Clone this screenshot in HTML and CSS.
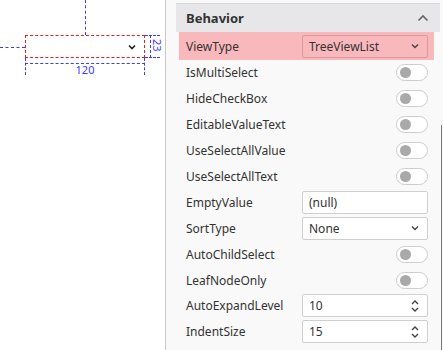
FILE: index.html
```html
<!DOCTYPE html>
<html lang="en">
<head>
    <meta charset="UTF-8">
    <title>Designer - Behavior</title>
    <link rel="stylesheet" href="styles.css">
</head>
<body>
    <div class="layout">
        <!-- Design surface -->
        <div class="canvas">
            <div class="guide guide-top"></div>
            <div class="guide guide-left"></div>
            <div class="control">
                <svg class="chev" width="8" height="6" viewBox="0 0 8 6"><path d="M1 1.5 L4 4.5 L7 1.5" fill="none" stroke="#222" stroke-width="1.6"/></svg>
            </div>
            <div class="dim-w"></div>
            <div class="tick tick-l"></div>
            <div class="tick tick-r"></div>
            <div class="dim-w-label">120</div>
            <div class="dim-h"></div>
            <div class="dim-h-top"></div>
            <div class="dim-h-bottom"></div>
            <div class="dim-h-label">23</div>
        </div>

        <!-- Property grid -->
        <div class="panel">
            <div class="group-header">
                <span>Behavior</span>
                <svg width="12" height="8" viewBox="0 0 12 8"><path d="M1.5 6.5 L6 2 L10.5 6.5" fill="none" stroke="#666" stroke-width="1.6"/></svg>
            </div>
            <div class="rows">
                <div class="row selected">
                    <span class="label">ViewType</span>
                    <div class="editor select">TreeViewList<svg width="8" height="6" viewBox="0 0 8 6"><path d="M1 1.5 L4 4.5 L7 1.5" fill="none" stroke="#444" stroke-width="1.4"/></svg></div>
                </div>
                <div class="row"><span class="label">IsMultiSelect</span><div class="toggle"></div></div>
                <div class="row"><span class="label">HideCheckBox</span><div class="toggle"></div></div>
                <div class="row"><span class="label">EditableValueText</span><div class="toggle"></div></div>
                <div class="row"><span class="label">UseSelectAllValue</span><div class="toggle"></div></div>
                <div class="row"><span class="label">UseSelectAllText</span><div class="toggle"></div></div>
                <div class="row"><span class="label">EmptyValue</span><div class="editor">(null)</div></div>
                <div class="row">
                    <span class="label">SortType</span>
                    <div class="editor select">None<svg width="8" height="6" viewBox="0 0 8 6"><path d="M1 1.5 L4 4.5 L7 1.5" fill="none" stroke="#444" stroke-width="1.4"/></svg></div>
                </div>
                <div class="row"><span class="label">AutoChildSelect</span><div class="toggle"></div></div>
                <div class="row"><span class="label">LeafNodeOnly</span><div class="toggle"></div></div>
                <div class="row">
                    <span class="label">AutoExpandLevel</span>
                    <div class="editor spin">10<svg width="8" height="14" viewBox="0 0 8 14"><path d="M1 5 L4 2 L7 5 M1 9 L4 12 L7 9" fill="none" stroke="#444" stroke-width="1.4"/></svg></div>
                </div>
                <div class="row">
                    <span class="label">IndentSize</span>
                    <div class="editor spin">15<svg width="8" height="14" viewBox="0 0 8 14"><path d="M1 5 L4 2 L7 5 M1 9 L4 12 L7 9" fill="none" stroke="#444" stroke-width="1.4"/></svg></div>
                </div>
            </div>
            <div class="scroll-thumb"></div>
        </div>
    </div>
</body>
</html>
```

FILE: styles.css
```css
* {
    margin: 0;
    padding: 0;
    box-sizing: border-box;
}

body {
    font-family: "Noto Sans", "Open Sans", sans-serif;
    font-size: 12px;
    color: #333;
    background-color: white;
    overflow: hidden;
}

.layout {
    display: flex;
    width: 443px;
    height: 350px;
}

/* Design surface */
.canvas {
    position: relative;
    width: 165px;
    flex-shrink: 0;
    background-color: white;
}

.guide,
.dim-w,
.dim-h,
.tick,
.dim-h-top,
.dim-h-bottom {
    position: absolute;
}

.guide-top {
    left: 85px;
    top: 0;
    height: 35px;
    border-left: 1px dashed #3b3bff;
}

.guide-left {
    left: 0;
    top: 47px;
    width: 25px;
    border-top: 1px dashed #3b3bff;
}

.control {
    position: absolute;
    left: 25px;
    top: 35px;
    width: 120px;
    height: 23px;
    border: 1px dashed #e02020;
    background-color: white;
}

.chev {
    position: absolute;
    right: 8px;
    top: 8px;
}

.dim-w {
    left: 25px;
    top: 63px;
    width: 120px;
    border-top: 1px dashed #3b3bff;
}

.tick {
    top: 58px;
    height: 17px;
    border-left: 1px dashed #3b3bff;
}

.tick-l {
    left: 25px;
}

.tick-r {
    left: 144px;
}

.dim-w-label {
    position: absolute;
    left: 25px;
    top: 63px;
    width: 120px;
    text-align: center;
    font-size: 11px;
    line-height: 14px;
    color: #3b3bff;
}

.dim-h {
    left: 150px;
    top: 35px;
    height: 23px;
    border-left: 1px dashed #3b3bff;
}

.dim-h-top {
    left: 145px;
    top: 35px;
    width: 15px;
    border-top: 1px dashed #3b3bff;
}

.dim-h-bottom {
    left: 145px;
    top: 57px;
    width: 15px;
    border-top: 1px dashed #3b3bff;
}

.dim-h-label {
    position: absolute;
    left: 151px;
    top: 39px;
    font-size: 11px;
    line-height: 12px;
    color: #3b3bff;
    writing-mode: vertical-rl;
}

/* Property grid */
.panel {
    position: relative;
    flex: 1;
    border-left: 1px solid #c8c8c8;
    background-color: #f9f9f9;
    padding: 3px 3px 0 10px;
}

.group-header {
    display: flex;
    align-items: center;
    justify-content: space-between;
    height: 29px;
    padding: 0 11px 0 10px;
    border-top: 1px solid #d6d6d8;
    background-color: #e7e7e9;
    font-size: 13px;
    font-weight: bold;
    color: #333;
}

.rows {
    padding: 0 6px 0 3px;
}

.row {
    display: flex;
    align-items: center;
    justify-content: space-between;
    height: 25.9px;
    padding: 0 6px 0 7px;
}

.row.selected {
    height: 28px;
    background-color: #f9b8bc;
}

.editor {
    display: flex;
    align-items: center;
    justify-content: space-between;
    width: 126px;
    height: 23px;
    padding: 0 8px 0 6px;
    background-color: white;
    border: 1px solid #cfcfcf;
    border-radius: 2px;
}

.row.selected .editor {
    background-color: transparent;
    border-color: #d9999d;
}

.toggle {
    position: relative;
    width: 32px;
    height: 17px;
    border: 1px solid #cdcdcd;
    border-radius: 9px;
    background-color: white;
}

.toggle::after {
    content: "";
    position: absolute;
    left: 3px;
    top: 2px;
    width: 11px;
    height: 11px;
    border-radius: 50%;
    background-color: #a9a9a9;
}

.scroll-thumb {
    position: absolute;
    right: 1px;
    top: 125px;
    bottom: 0;
    width: 1px;
    background-color: #777;
}
```
